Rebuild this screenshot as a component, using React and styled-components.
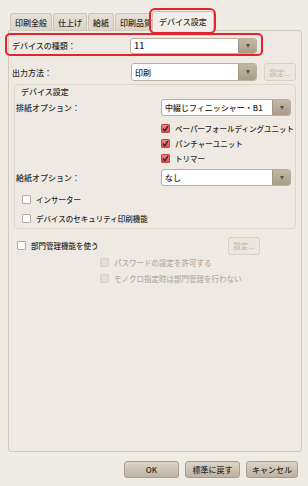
import React from "react";
import styled, { createGlobalStyle } from "styled-components";

const Global = createGlobalStyle`
  html, body { margin: 0; padding: 0; }
  body {
    font-family: "Noto Sans CJK JP", "Noto Sans", sans-serif;
    font-size: 8px;
    color: #2f2c29;
  }
`;

const Window = styled.div`
  width: 308px;
  height: 486px;
  background: #efebe5;
  box-sizing: border-box;
  display: flex;
  flex-direction: column;
`;

const TabBar = styled.div`
  display: flex;
  align-items: flex-end;
  height: 30px;
  padding-left: 10px;
  gap: 1px;
`;

const Tab = styled.div`
  height: 16px;
  padding: 0 4px;
  display: flex;
  align-items: center;
  background: linear-gradient(#e6e0d6, #dcd5ca);
  border: 1px solid #cbc3b5;
  border-bottom: none;
  border-radius: 3px 3px 0 0;
  font-weight: 500;
  white-space: nowrap;
`;

const ActiveTab = styled(Tab)`
  position: relative;
  z-index: 1;
  height: 19px;
  margin-left: -6px;
  padding: 0 6px;
  background: #f2efea;
  margin-bottom: -1px;
  &::after {
    content: "";
    position: absolute;
    inset: -4px -3px -3px -4px;
    border: 2px solid #e0252b;
    border-radius: 6px;
  }
`;

const Panel = styled.div`
  margin-left: 8px;
  width: 294px;
  height: 422px;
  box-sizing: border-box;
  border: 1px solid #d2cabd;
  border-radius: 0 3px 3px 3px;
  background: #eeeae3;
  padding: 0 0 0 3px;
  display: flex;
  flex-direction: column;
`;

const Row = styled.div`
  display: flex;
  align-items: center;
  height: ${(p) => p.$h || 17}px;
  margin-top: ${(p) => p.$mt || 0}px;
  padding-left: ${(p) => p.$indent || 0}px;
`;

const MarkedRow = styled(Row)`
  position: relative;
  &::after {
    content: "";
    position: absolute;
    inset: -4px 0 -2px -7px;
    width: 254px;
    border: 2px solid #e0252b;
    border-radius: 5px;
  }
`;

const Label = styled.div`
  width: ${(p) => p.$w}px;
  flex: none;
  font-weight: 500;
  white-space: nowrap;
`;

const Combo = styled.div`
  width: ${(p) => p.$w}px;
  height: ${(p) => p.$h || 17}px;
  box-sizing: border-box;
  display: flex;
  background: #fff;
  border: 1px solid #b9b0a2;
  border-radius: 3px;
  overflow: hidden;
  flex: none;
`;

const ComboText = styled.div`
  flex: 1;
  display: flex;
  align-items: center;
  padding-left: 3px;
  font-size: ${(p) => (p.$big ? 9 : 8)}px;
  font-weight: 500;
  white-space: nowrap;
`;

const ComboArrow = styled.div`
  width: 17px;
  display: flex;
  align-items: center;
  justify-content: center;
  background: linear-gradient(#c4b8a5, #a99d89);
  border-left: 1px solid #a3978a;
  &::before {
    content: "";
    border-left: 2.5px solid transparent;
    border-right: 2.5px solid transparent;
    border-top: 4px solid #5b5249;
  }
`;

const SmallButton = styled.div`
  width: 32px;
  height: 18px;
  box-sizing: border-box;
  margin-left: ${(p) => p.$ml || 0}px;
  display: flex;
  align-items: center;
  justify-content: center;
  background: #ebe6de;
  border: 1px solid #d8d1c5;
  border-radius: 3px;
  color: #bdb6aa;
  font-size: 7.5px;
`;

const Group = styled.div`
  margin: 3px 0 0 2px;
  width: 282px;
  height: 145px;
  box-sizing: border-box;
  border: 1px solid #dcd5c9;
  border-radius: 4px;
  padding: 1px 4px 0 1px;
  display: flex;
  flex-direction: column;
`;

const Legend = styled.div`
  height: 11px;
  line-height: 11px;
  padding-left: 5px;
  font-weight: 500;
`;

const Check = styled.div`
  display: flex;
  align-items: center;
  gap: 5px;
  font-size: 7.5px;
  font-weight: 500;
  color: ${(p) => (p.$disabled ? "#b3ada4" : "inherit")};
  white-space: nowrap;
`;

const Box = styled.span`
  width: 7px;
  height: 7px;
  flex: none;
  border-radius: 1px;
  border: 1px solid
    ${(p) => (p.$checked ? "#c8484a" : p.$disabled ? "#d4cec4" : "#b6aea2")};
  background: ${(p) =>
    p.$checked
      ? "linear-gradient(#f08585, #d54e4e)"
      : p.$disabled
      ? "#e3ded6"
      : "#fff"};
  display: flex;
  align-items: center;
  justify-content: center;
`;

const Footer = styled.div`
  display: flex;
  justify-content: flex-end;
  gap: 6px;
  padding: 9px 10px 0 0;
`;

const DialogButton = styled.div`
  width: ${(p) => p.$w}px;
  height: 17px;
  box-sizing: border-box;
  display: flex;
  align-items: center;
  justify-content: center;
  border: 1px solid #a99e8c;
  border-radius: 3px;
  background: linear-gradient(#ddd5c7, #bdb29f);
  font-weight: 500;
  font-size: 8px;
`;

function CheckBox({ label, checked, disabled }) {
  return (
    <Check $disabled={disabled}>
      <Box $checked={checked} $disabled={disabled}>
        {checked && (
          <svg width="7" height="7" viewBox="0 0 7 7">
            <path d="M1 3.6 L2.8 5.6 L6.2 0.8" fill="none" stroke="#2d2622" strokeWidth="1.3" />
          </svg>
        )}
      </Box>
      {label}
    </Check>
  );
}

export default function App() {
  return (
    <>
      <Global />
      <Window>
        <TabBar>
          <Tab>印刷全般</Tab>
          <Tab>仕上げ</Tab>
          <Tab>給紙</Tab>
          <Tab>印刷品質</Tab>
          <ActiveTab>デバイス設定</ActiveTab>
        </TabBar>
        <Panel>
          <MarkedRow $mt={6}>
            <Label $w={118}>デバイスの種類：</Label>
            <Combo $w={127} $h={16}>
              <ComboText $big>11</ComboText>
              <ComboArrow />
            </Combo>
          </MarkedRow>
          <Row $mt={9} $h={18}>
            <Label $w={119}>出力方法：</Label>
            <Combo $w={126} $h={18}>
              <ComboText>印刷</ComboText>
              <ComboArrow />
            </Combo>
            <SmallButton $ml={7}>設定...</SmallButton>
          </Row>
          <Group>
            <Legend>デバイス設定</Legend>
            <Row $mt={2}>
              <Label $w={145}>排紙オプション：</Label>
              <Combo $w={130}>
                <ComboText>中綴じフィニッシャー・B1</ComboText>
                <ComboArrow />
              </Combo>
            </Row>
            <Row $mt={5} $h={15} $indent={145}>
              <CheckBox checked label="ペーパーフォールディングユニット" />
            </Row>
            <Row $h={15} $indent={145}>
              <CheckBox checked label="パンチャーユニット" />
            </Row>
            <Row $h={15} $indent={145}>
              <CheckBox checked label="トリマー" />
            </Row>
            <Row $mt={3}>
              <Label $w={145}>給紙オプション：</Label>
              <Combo $w={130}>
                <ComboText>なし</ComboText>
                <ComboArrow />
              </Combo>
            </Row>
            <Row $mt={6} $h={14} $indent={6}>
              <CheckBox label="インサーター" />
            </Row>
            <Row $mt={5} $h={14} $indent={6}>
              <CheckBox label="デバイスのセキュリティ印刷機能" />
            </Row>
          </Group>
          <Row $mt={8} $h={17} $indent={5}>
            <Label $w={211}>
              <CheckBox label="部門管理機能を使う" />
            </Label>
            <SmallButton>設定...</SmallButton>
          </Row>
          <Row $h={16} $indent={88}>
            <CheckBox disabled label="パスワードの設定を許可する" />
          </Row>
          <Row $h={16} $indent={88}>
            <CheckBox disabled label="モノクロ指定時は部門管理を行わない" />
          </Row>
        </Panel>
        <Footer>
          <DialogButton $w={55}>OK</DialogButton>
          <DialogButton $w={55}>標準に戻す</DialogButton>
          <DialogButton $w={52}>キャンセル</DialogButton>
        </Footer>
      </Window>
    </>
  );
}
